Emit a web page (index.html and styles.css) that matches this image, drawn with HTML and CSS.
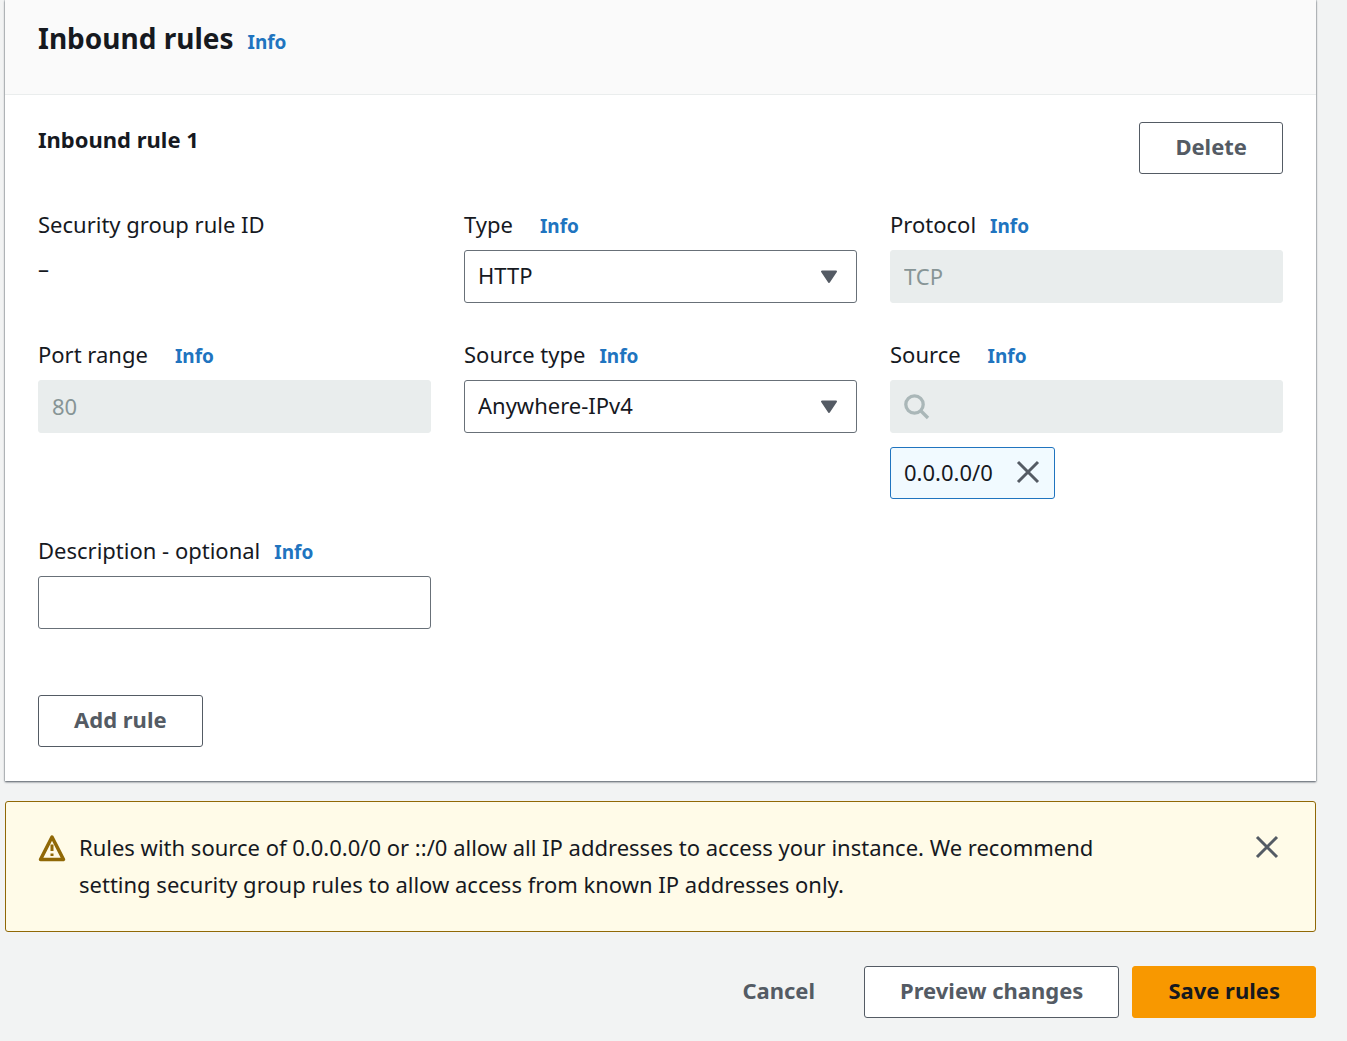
FILE: index.html
```html
<!DOCTYPE html>
<html lang="en">
<head>
<meta charset="utf-8">
<meta name="viewport" content="width=device-width, initial-scale=1">
<title>Edit inbound rules</title>
<link rel="stylesheet" href="styles.css">
</head>
<body>
<main class="page">
  <section class="container">
    <header class="container-header">
      <h1 class="title">Inbound rules</h1>
      <a class="info" href="#">Info</a>
    </header>
    <div class="container-body">
      <div class="rule-header">
        <h2 class="subtitle">Inbound rule 1</h2>
        <button class="button" type="button">Delete</button>
      </div>
      <div class="fields">
        <div class="field">
          <div class="label-row"><span>Security group rule ID</span></div>
          <div class="value">–</div>
        </div>
        <div class="field">
          <div class="label-row spaced"><label for="type">Type</label><a class="info" href="#">Info</a></div>
          <div class="select">
            <select class="control" id="type"><option>HTTP</option><option>HTTPS</option></select>
            <svg class="caret" viewBox="0 0 18 14" aria-hidden="true"><path d="M2 1.500h14L9 12z"/></svg>
          </div>
        </div>
        <div class="field">
          <div class="label-row"><label for="protocol">Protocol</label><a class="info" href="#">Info</a></div>
          <input class="control" id="protocol" type="text" value="TCP" disabled>
        </div>
        <div class="field">
          <div class="label-row spaced"><label for="port">Port range</label><a class="info" href="#">Info</a></div>
          <input class="control" id="port" type="text" value="80" disabled>
        </div>
        <div class="field">
          <div class="label-row"><label for="source-type">Source type</label><a class="info" href="#">Info</a></div>
          <div class="select">
            <select class="control" id="source-type"><option>Anywhere-IPv4</option><option>Custom</option></select>
            <svg class="caret" viewBox="0 0 18 14" aria-hidden="true"><path d="M2 1.500h14L9 12z"/></svg>
          </div>
        </div>
        <div class="field">
          <div class="label-row spaced"><label for="source">Source</label><a class="info" href="#">Info</a></div>
          <div class="search">
            <input class="control" id="source" type="text" disabled>
            <svg class="search-icon" viewBox="0 0 26 26" aria-hidden="true"><circle cx="10.500" cy="10.500" r="8.700"/><path d="M16.500 16.500l7.500 7.500"/></svg>
          </div>
          <div class="token">
            <span>0.0.0.0/0</span>
            <button class="icon-button" type="button" aria-label="Remove 0.0.0.0/0"><svg class="close" viewBox="0 0 24 24" aria-hidden="true"><path d="M2 2l20 20M22 2L2 22"/></svg></button>
          </div>
        </div>
        <div class="field">
          <div class="label-row"><label for="description">Description - optional</label><a class="info" href="#">Info</a></div>
          <input class="control" id="description" type="text">
        </div>
      </div>
      <button class="button" type="button">Add rule</button>
    </div>
  </section>

  <section class="alert">
    <svg class="warning" viewBox="0 0 28 28" aria-hidden="true"><path class="triangle" d="M14 3L25.500 25.500h-23z"/><path class="mark" d="M14 10.500v6.500M14 19.500v2.500"/></svg>
    <p class="alert-text">Rules with source of 0.0.0.0/0 or ::/0 allow all IP addresses to access your instance. We recommend setting security group rules to allow access from known IP addresses only.</p>
    <button class="icon-button" type="button" aria-label="Dismiss"><svg class="close" viewBox="0 0 24 24" aria-hidden="true"><path d="M2 2l20 20M22 2L2 22"/></svg></button>
  </section>

  <footer class="actions">
    <button class="button link" type="button">Cancel</button>
    <button class="button" type="button">Preview changes</button>
    <button class="button primary" type="submit">Save rules</button>
  </footer>
</main>
</body>
</html>
```
FILE: styles.css
```css
* {
  box-sizing: border-box;
}

body {
  margin: 0;
  background: #f2f3f3;
  color: #16191f;
  font-family: "Noto Sans", "Open Sans", sans-serif;
  font-size: 22px;
  line-height: 37px;
}

h1, h2, p {
  margin: 0;
}

button, input, select {
  font: inherit;
  color: inherit;
}

.page {
  padding: 0 31px 23px 5px;
}

.container {
  background: #fff;
  box-shadow: 0 1px 2px #545b64, 0 0 1px #687078;
}

.container-header {
  display: flex;
  align-items: baseline;
  gap: 14px;
  padding: 17px 33px 33px;
  background: #fafafa;
  border-bottom: 1px solid #eaeded;
}

.title {
  font-size: 28px;
  line-height: 43px;
}

.subtitle {
  font-size: 22px;
  line-height: 35px;
}

.info {
  color: #2074bf;
  font-size: 19px;
  font-weight: 700;
  text-decoration: none;
}

.container-body {
  padding: 27px 33px 34px;
}

.rule-header {
  display: flex;
  justify-content: space-between;
  align-items: flex-start;
}

.button {
  height: 52px;
  padding: 0 35px 4px;
  border: 1px solid #545b64;
  border-radius: 3px;
  background: #fff;
  color: #545b64;
  font-weight: 700;
}

.link {
  border-color: transparent;
  background: transparent;
}

.primary {
  border-color: #f89800;
  background: #f89800;
  color: #16191f;
}

.fields {
  display: grid;
  grid-template-columns: repeat(3, minmax(0, 1fr));
  gap: 33px;
  margin: 32px 0 66px;
}

.label-row {
  display: flex;
  align-items: baseline;
  gap: 14px;
  height: 37px;
  margin-bottom: 7px;
}

.spaced {
  gap: 27px;
}

.control {
  display: block;
  width: 100%;
  height: 53px;
  padding: 0 13px 2px;
  border: 1px solid #687078;
  border-radius: 3px;
  background: #fff;
  appearance: none;
}

.control:disabled {
  border-color: #e9eded;
  background: #e9eded;
  color: #879596;
  opacity: 1;
}

.select, .search {
  position: relative;
}

.caret {
  position: absolute;
  top: 20px;
  right: 19px;
  width: 18px;
  height: 14px;
  fill: #545b64;
  stroke: #545b64;
  stroke-width: 2;
  stroke-linejoin: round;
}

.search-icon {
  position: absolute;
  top: 14px;
  left: 14px;
  width: 26px;
  height: 26px;
  fill: none;
  stroke: #aab7b8;
  stroke-width: 3.300;
}

.token {
  display: flex;
  align-items: center;
  justify-content: space-between;
  width: fit-content;
  min-width: 165px;
  height: 52px;
  margin-top: 14px;
  padding: 0 14px 2px 13px;
  border: 1px solid #2074bf;
  border-radius: 3px;
  background: #f1faff;
}

.icon-button {
  display: flex;
  padding: 0;
  border: 0;
  background: none;
}

.close {
  width: 24px;
  height: 24px;
  fill: none;
  stroke: #545b64;
  stroke-width: 3;
}

.alert {
  display: flex;
  align-items: flex-start;
  gap: 13px;
  margin-top: 20px;
  padding: 27px 36px 28px 32px;
  border: 1px solid #906806;
  border-radius: 3px;
  background: #fffbe8;
}

.warning {
  flex: none;
  width: 28px;
  height: 28px;
  margin-top: 5px;
  fill: none;
  stroke: #906806;
  stroke-width: 3.500;
}

.triangle {
  stroke-linejoin: round;
}

.mark {
  stroke-width: 3;
}

.alert-text {
  flex: 1;
  padding-right: 100px;
}

.alert .icon-button {
  margin-top: 6px;
}

.actions {
  display: flex;
  justify-content: flex-end;
  gap: 13px;
  margin-top: 34px;
}
```
